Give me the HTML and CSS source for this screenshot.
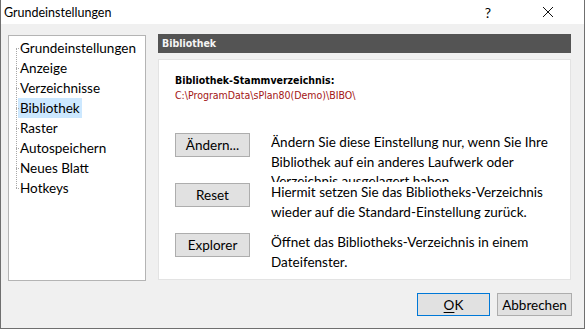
FILE: index.html
```html
<!DOCTYPE html>
<html lang="de">
<head>
  <meta charset="UTF-8">
  <title>Grundeinstellungen</title>
  <link rel="stylesheet" href="styles.css">
</head>
<body>
  <div class="window">
    <div class="titlebar">
      <span class="titlebar-text">Grundeinstellungen</span>
      <span class="titlebar-help">?</span>
      <span class="titlebar-close">
        <svg width="12" height="12" viewBox="0 0 12 12"><path d="M1 1L11 11M11 1L1 11" stroke="#111" stroke-width="1" fill="none"/></svg>
      </span>
    </div>

    <div class="dialog-body">
      <div class="dialog-main">
        <div class="tree">
          <ul class="tree-list">
            <li class="tree-item"><span>Grundeinstellungen</span></li>
            <li class="tree-item"><span>Anzeige</span></li>
            <li class="tree-item"><span>Verzeichnisse</span></li>
            <li class="tree-item selected"><span>Bibliothek</span></li>
            <li class="tree-item"><span>Raster</span></li>
            <li class="tree-item"><span>Autospeichern</span></li>
            <li class="tree-item"><span>Neues Blatt</span></li>
            <li class="tree-item"><span>Hotkeys</span></li>
          </ul>
        </div>

        <div class="settings">
          <div class="settings-header">Bibliothek</div>
          <div class="settings-panel">
            <div class="path-label">Bibliothek-Stammverzeichnis:</div>
            <div class="path-value">C:\ProgramData\sPlan80(Demo)\BIBO\</div>

            <div class="action-list">
              <div class="action-row">
                <button class="btn">Ändern...</button>
                <div class="action-desc">Ändern Sie diese Einstellung nur, wenn Sie Ihre<br>Bibliothek auf ein anderes Laufwerk oder<br>Verzeichnis ausgelagert haben.</div>
              </div>
              <div class="action-row">
                <button class="btn">Reset</button>
                <div class="action-desc">Hiermit setzen Sie das Bibliotheks-Verzeichnis<br>wieder auf die Standard-Einstellung zurück.</div>
              </div>
              <div class="action-row">
                <button class="btn">Explorer</button>
                <div class="action-desc">Öffnet das Bibliotheks-Verzeichnis in einem<br>Dateifenster.</div>
              </div>
            </div>
          </div>
        </div>
      </div>

      <div class="dialog-footer">
        <button class="btn btn-default"><u>O</u>K</button>
        <button class="btn">Abbrechen</button>
      </div>
    </div>
  </div>
</body>
</html>
```

FILE: styles.css
```css
body {
  margin: 0;
  padding: 0;
  font-family: Lato, "Noto Sans", sans-serif;
  color: #000000;
  background-color: #f0f0f0;
  overflow: hidden;
}

.window {
  width: 585px;
  height: 329px;
  box-sizing: border-box;
  border: 1px solid #6f6f6f;
  border-top: none;
  display: flex;
  flex-direction: column;
}

/* Titelleiste */
.titlebar {
  height: 24px;
  flex-shrink: 0;
  background-color: #ffffff;
  display: flex;
  align-items: center;
  font-size: 12.5px;
  color: #000000;
}

.titlebar-text {
  flex: 1;
  padding-left: 3px;
}

.titlebar-help {
  width: 20px;
  text-align: center;
  font-size: 14px;
  margin-right: 32px;
}

.titlebar-close {
  width: 36px;
  display: flex;
  justify-content: center;
  margin-right: 18px;
}

.dialog-body {
  flex: 1;
  background-color: #f0f0f0;
  padding: 10px 12px 0 7px;
  display: flex;
  flex-direction: column;
}

.dialog-main {
  display: flex;
  align-items: flex-start;
}

/* Baumansicht links */
.tree {
  width: 138px;
  height: 246px;
  margin-top: 1px;
  box-sizing: border-box;
  background-color: #ffffff;
  border: 1px solid #b4b4b4;
}

.tree-list {
  list-style: none;
  margin: 0;
  padding: 2px 0 0 0;
  position: relative;
}

.tree-list::before {
  content: "";
  position: absolute;
  left: 7px;
  top: 12px;
  height: 140px;
  border-left: 1px dotted #a8a8a8;
}

.tree-item {
  height: 20px;
  line-height: 20px;
  font-size: 13.5px;
  padding-left: 9px;
  position: relative;
  white-space: nowrap;
}

.tree-item::before {
  content: "";
  position: absolute;
  left: 7px;
  top: 10px;
  width: 3px;
  border-top: 1px dotted #a8a8a8;
}

.tree-item span {
  display: inline-block;
  padding: 0 2px;
}

.tree-item.selected span {
  background-color: #cce8ff;
}

/* Einstellungsbereich rechts */
.settings {
  margin-left: 12px;
  width: 413px;
}

.settings-header {
  height: 19px;
  line-height: 19px;
  background-color: #545454;
  color: #f4f4f4;
  font-family: "DejaVu Sans Condensed", "DejaVu Sans", sans-serif;
  font-weight: bold;
  font-size: 10.5px;
  padding-left: 4px;
}

.settings-panel {
  margin-top: 6px;
  height: 221px;
  box-sizing: border-box;
  background-color: #ffffff;
  border: 1px solid #e3e3e3;
  padding: 14px 15px 0 16px;
}

.path-label {
  font-family: "DejaVu Sans Condensed", "DejaVu Sans", sans-serif;
  font-weight: bold;
  font-size: 10.5px;
  line-height: 13px;
}

.path-value {
  font-family: "DejaVu Sans Condensed", "DejaVu Sans", sans-serif;
  font-size: 10.5px;
  line-height: 14px;
  margin-top: 1px;
  color: #a31515;
}

.action-list {
  margin-top: 31px;
  display: flex;
  flex-direction: column;
}

.action-row {
  display: flex;
  align-items: flex-start;
  height: 50px;
}

.btn {
  font-family: Lato, "Noto Sans", sans-serif;
  font-size: 13.5px;
  color: #000000;
  background-color: #e1e1e1;
  border: 1px solid #adadad;
  height: 24px;
  width: 75px;
  padding: 0;
  flex-shrink: 0;
}

.action-desc {
  margin-left: 21px;
  font-size: 13.5px;
  line-height: 19.5px;
  height: 49px;
  overflow: hidden;
  white-space: nowrap;
}

/* Fußleiste */
.dialog-footer {
  display: flex;
  justify-content: flex-end;
  gap: 7px;
  margin-top: 12px;
}

.dialog-footer .btn {
  height: 23px;
}

.btn-default {
  width: 73px;
  border-color: #0078d7;
}

.btn-default u {
  text-decoration: underline;
  text-underline-offset: 2px;
}
```
